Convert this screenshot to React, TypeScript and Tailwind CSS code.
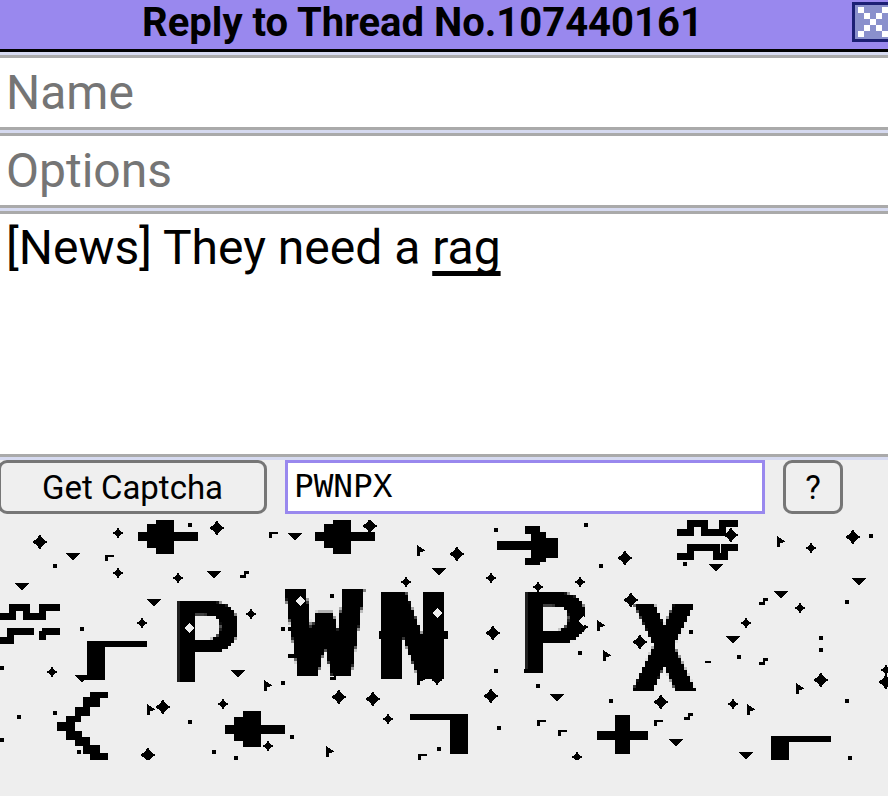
const plus: number[][] = [
  [118, 533], [118, 573], [178, 578], [142, 623], [251, 614], [52, 672], [223, 704], [388, 719], [268, 746], [406, 582], [437, 680],
  [811, 548], [491, 578], [580, 582], [538, 587], [800, 608], [746, 623], [583, 627], [733, 704], [577, 757], [886, 670],
];
const stars: number[][] = [
  [40, 542], [217, 528], [370, 526], [163, 707], [148, 755], [339, 697], [373, 699], [457, 554], [853, 537], [625, 558],
  [731, 535], [631, 600], [640, 642], [821, 680], [491, 696], [661, 702], [493, 633], [886, 682],
];
const tris: number[][] = [
  [73, 556], [22, 586], [154, 602], [214, 574], [295, 536], [238, 673], [439, 571], [82, 678], [716, 567], [859, 581],
  [781, 594], [733, 639], [557, 697], [676, 742], [746, 755],
];
const dots: number[][] = [
  [55, 566], [190, 525], [82, 629], [2, 668], [19, 717], [55, 713], [2, 740], [79, 752], [190, 722], [214, 752], [236, 758],
  [292, 737], [283, 683], [283, 629], [332, 596], [439, 749], [586, 525], [496, 530], [871, 536], [601, 566], [685, 564],
  [847, 602], [691, 632], [821, 638], [821, 650], [739, 657], [580, 653], [496, 671], [526, 671], [538, 686], [611, 701],
  [847, 701], [499, 728], [850, 758],
];
const flags: number[][] = [
  [421, 551], [268, 686], [330, 752], [151, 710], [421, 680], [781, 542], [601, 626], [607, 656], [751, 710], [800, 689],
];
const hooks: number[][] = [[273, 535], [109, 558], [541, 723], [562, 733], [658, 723], [422, 757]];
const squigs: number[][] = [[244, 575], [334, 677], [763, 602], [763, 662], [688, 717]];

// big pixel shapes from the captcha noise, [x, y, w, h]
const blocks: number[][] = [
  [100, 641, 47, 6], [87, 641, 18, 39], [81, 677, 12, 3],
  [771, 736, 60, 6], [771, 736, 18, 24],
  [410, 714, 58, 6], [450, 714, 18, 40],
  [615, 715, 15, 39], [597, 731, 51, 9],
  [705, 661, 6, 2],
  // arrow pointing right
  [497, 541, 50, 9], [525, 526, 15, 8], [531, 532, 15, 30], [534, 538, 24, 20], [525, 558, 15, 7],
  // ticks on the letters
  [288, 627, 10, 4], [288, 654, 10, 4], [379, 631, 6, 8], [444, 631, 4, 8],
];

const leftArrows: number[][] = [[138, 536], [315, 536], [225, 729]];

const chevron: number[][] = [
  [90, 692, 18, 6], [83, 697, 17, 10], [75, 707, 15, 9], [66, 716, 15, 6], [57, 722, 18, 9],
  [66, 731, 16, 9], [75, 737, 15, 9], [83, 745, 17, 9], [90, 753, 18, 7],
];

const specks: number[][] = [[189, 628], [300, 601], [437, 613], [583, 621]];

function Captcha() {
  return (
    <svg width="888" height="240" viewBox="0 520 888 240" className="block" shapeRendering="crispEdges">
      <defs>
        <filter id="blocky" filterUnits="userSpaceOnUse" x="0" y="520" width="888" height="240">
          <feFlood x="1" y="521" width="1" height="1" floodColor="#000" />
          <feComposite x="0" y="520" width="3" height="3" />
          <feTile result="grid" />
          <feComposite in="SourceGraphic" in2="grid" operator="in" />
          <feMorphology operator="dilate" radius="1" />
        </filter>
      </defs>
      <g fill="#000">
        {plus.map(([x, y], i) => (
          <polygon key={i} points={`${x},${y - 6} ${x + 2},${y - 2} ${x + 6},${y} ${x + 2},${y + 2} ${x},${y + 6} ${x - 2},${y + 2} ${x - 6},${y} ${x - 2},${y - 2}`} />
        ))}
        {stars.map(([x, y], i) => (
          <polygon key={i} points={`${x},${y - 8} ${x + 3},${y - 3} ${x + 8},${y} ${x + 3},${y + 3} ${x},${y + 8} ${x - 3},${y + 3} ${x - 8},${y} ${x - 3},${y - 3}`} />
        ))}
        {tris.map(([x, y], i) => (
          <polygon key={i} points={`${x - 7},${y - 3} ${x + 7},${y - 3} ${x + 1},${y + 4} ${x - 1},${y + 4}`} />
        ))}
        {dots.map(([x, y], i) => (
          <rect key={i} x={x - 2} y={y - 2} width="4" height="4" />
        ))}
        {flags.map(([x, y], i) => (
          <polygon key={i} points={`${x - 4},${y - 6} ${x + 5},${y} ${x - 1},${y + 1} ${x - 1},${y + 5} ${x - 4},${y + 5}`} />
        ))}
        {hooks.map(([x, y], i) => (
          <polygon key={i} points={`${x - 4},${y - 3} ${x + 5},${y - 3} ${x + 5},${y - 1} ${x - 1},${y - 1} ${x - 1},${y + 3} ${x - 4},${y + 3}`} />
        ))}
        {squigs.map(([x, y], i) => (
          <polygon key={i} points={`${x - 4},${y} ${x},${y} ${x},${y - 4} ${x + 5},${y - 4} ${x + 5},${y - 1} ${x + 2},${y - 1} ${x + 2},${y + 3} ${x - 4},${y + 3}`} />
        ))}
        {blocks.map(([x, y, w, h], i) => (
          <rect key={i} x={x} y={y} width={w} height={h} />
        ))}
        {chevron.map(([x, y, w, h], i) => (
          <rect key={i} x={x} y={y} width={w} height={h} />
        ))}
        {leftArrows.map(([x, cy], i) => (
          <g key={i}>
            <rect x={x} y={cy - 4} width="60" height="9" />
            <rect x={x + 9} y={cy - 12} width="18" height="24" />
            <rect x={x + 18} y={cy - 18} width="18" height="36" />
          </g>
        ))}
        {/* wavy lines */}
        <g fill="none" stroke="#000" strokeWidth="7">
          <path d="M0 616H12V607H26V616H42V607H60" />
          <path d="M0 640H10V631H34M42 631H60M42 631V640" />
          <path d="M677 532H690V523H704V532H722V523H738" />
          <path d="M677 556H690V547H716V556H724V547H738" />
        </g>
      </g>
      <g filter="url(#blocky)" fontFamily="'Liberation Mono', monospace" fontWeight="700" fontSize="122" stroke="#000">
        <text x="170" y="682" strokeWidth="0">P</text>
        <text x="288" y="673" strokeWidth="6">W</text>
        <text x="376" y="676" strokeWidth="6">N</text>
        <text x="518" y="673" strokeWidth="0">P</text>
        <text transform="translate(637 688) scale(0.74 1)" strokeWidth="8">X</text>
      </g>
      <g fill="#eeeeee">
        {specks.map(([x, y], i) => (
          <polygon key={i} points={`${x},${y - 5} ${x + 5},${y} ${x},${y + 5} ${x - 5},${y}`} />
        ))}
      </g>
    </svg>
  );
}

function CloseIcon() {
  const squares = [
    [858, 7], [882, 7], [864, 13], [876, 13], [870, 19], [864, 25], [876, 25], [858, 31], [882, 31],
  ];
  return (
    <svg width="36" height="40" viewBox="852 2 36 40" className="block shrink-0" shapeRendering="crispEdges">
      <rect x="852" y="2" width="36" height="40" fill="#1c1f74" />
      <rect x="855" y="5" width="33" height="34" fill="#8a90cc" />
      {squares.map(([x, y], i) => (
        <rect key={i} x={x} y={y} width="6" height="6" fill="#fff" />
      ))}
    </svg>
  );
}

export default function App() {
  return (
    <div className="w-[888px] h-[796px] overflow-hidden flex flex-col bg-[#eeeeee] font-['Roboto',sans-serif] text-black">
      <div className="h-[52px] shrink-0 bg-[#9988ee] border-b-[3px] border-black flex items-start justify-between">
        <div className="flex-1 text-center font-bold text-[40px] leading-[45px] pr-[7px]">Reply to Thread No.107440161</div>
        <div className="pt-[2px]">
          <CloseIcon />
        </div>
      </div>
      <div className="h-[3px] shrink-0 bg-[#d6daf0]" />
      <div className="h-[75px] shrink-0 bg-white border-y-[3px] border-[#aaaaaa] pl-[6px] flex items-center text-[48px] text-[#757575]">
        Name
      </div>
      <div className="h-[3px] shrink-0 bg-[#d6daf0]" />
      <div className="h-[75px] shrink-0 bg-white border-y-[3px] border-[#aaaaaa] pl-[6px] flex items-center text-[48px] text-[#757575]">
        Options
      </div>
      <div className="h-[3px] shrink-0 bg-[#d6daf0]" />
      <div className="h-[246px] shrink-0 bg-white border-y-[3px] border-[#aaaaaa] pl-[6px] pt-[6px] text-[48px] leading-[56px]">
        [News] They need a <span className="underline [text-decoration-thickness:5px] underline-offset-[7px] [text-decoration-skip-ink:none]">rag</span>
      </div>
      <div className="h-[3px] shrink-0 bg-[#d6daf0]" />
      <div className="h-[54px] shrink-0 flex items-stretch">
        <button className="w-[269px] -ml-[2px] bg-[#efefef] border-[3px] border-[#767676] rounded-[9px] text-[33px] pb-[2px]">Get Captcha</button>
        <div className="w-[480px] ml-[18px] bg-white border-[3px] border-[#9988ee] pl-[6px] flex items-center text-[32.7px] font-['DejaVu_Sans_Mono',monospace]">
          PWNPX
        </div>
        <button className="w-[60px] ml-[18px] bg-[#efefef] border-[3px] border-[#767676] rounded-[9px] text-[33px] pb-[2px]">?</button>
      </div>
      <div className="pt-[6px]">
        <Captcha />
      </div>
    </div>
  );
}
